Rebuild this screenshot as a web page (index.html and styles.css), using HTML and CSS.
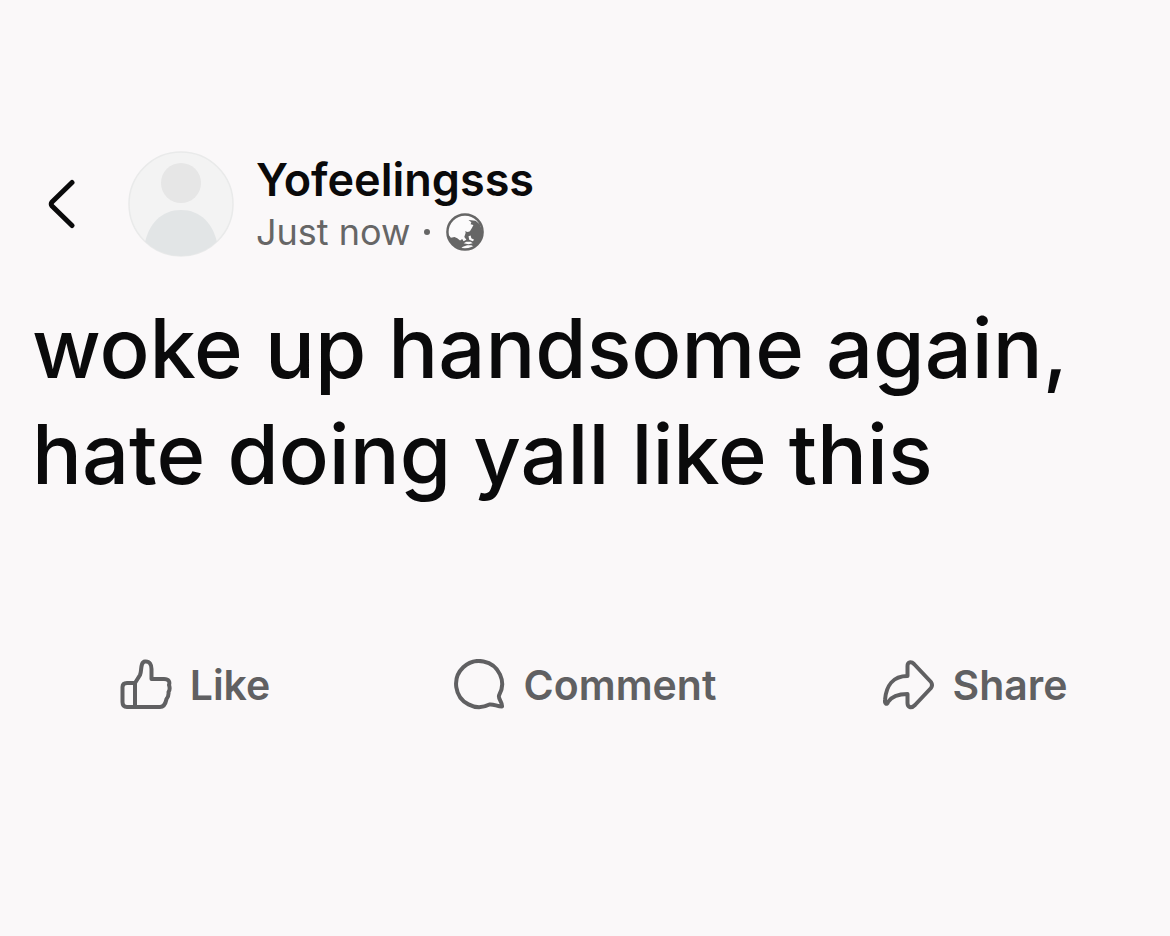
FILE: index.html
```html
<!DOCTYPE html>
<html lang="en">
<head>
  <meta charset="UTF-8">
  <meta name="viewport" content="width=device-width, initial-scale=1.0">
  <title>Yofeelingsss</title>
  <link rel="stylesheet" href="styles.css">
</head>
<body>
  <article class="post">
    <header class="post-header">
      <button class="back" type="button" aria-label="Back">
        <svg width="28" height="52" viewBox="0 0 28 52" fill="none" stroke="currentColor" stroke-width="5" stroke-linecap="round" stroke-linejoin="round">
          <path d="M24 4.500L4 24Q2.500 26 4 28L24 47.500"/>
        </svg>
      </button>
      <svg class="avatar" viewBox="0 0 106 106" aria-hidden="true">
        <defs>
          <clipPath id="avatar-clip"><circle cx="53" cy="53" r="52"/></clipPath>
        </defs>
        <circle cx="53" cy="53" r="52" fill="#f3f3f3" stroke="#e9eaea" stroke-width="1.500"/>
        <g clip-path="url(#avatar-clip)">
          <circle cx="53" cy="32" r="20" fill="#e6e6e6"/>
          <path d="M16 96C20 72 34 59 53 59S86 72 90 96L70 106H36Z" fill="#e2e5e6"/>
        </g>
      </svg>
      <div class="author">
        <h1 class="name">Yofeelingsss</h1>
        <p class="meta">
          <span>Just now</span>
          <span class="dot"></span>
          <svg class="globe" viewBox="0 0 108 108" aria-label="Public">
            <circle cx="54" cy="54" r="50" fill="#fcfbfc" stroke="#666" stroke-width="7"/>
            <path d="M64 20L84 22L96 32L104 54L100 74L88 92L80 96L72 92L60 92L48 96L42 101L24 94L8 74L5 60L14 70L24 68L32 72L40 78L46 74L50 80L58 76L52 68L56 56L54 52L62 54L68 52L74 42L78 34L70 32L72 26Z" fill="#666"/>
            <path d="M64 66L70 64L72 72L80 76L76 80L66 76ZM50 86L58 82L70 82L76 86L64 89Z" fill="#fcfbfc"/>
          </svg>
        </p>
      </div>
    </header>

    <p class="content">woke up handsome again, hate doing yall like this</p>

    <div class="actions">
      <button class="action" type="button">
        <svg class="icon" viewBox="0 0 52 52">
          <path d="M15 24L20 16C22 12 20 3 25 2.500C30 2 31.500 6 31.500 10V20H44C49 20 50 23 49 26Q50.500 30 48.500 33Q49 37 46.500 40C45.500 45 44 48 40 48H7C4 48 2.500 46 2.500 43V28C2.500 25 4 24 7 24H15V48"/>
        </svg>
        Like
      </button>
      <button class="action" type="button">
        <svg class="icon" viewBox="0 0 52 52">
          <path d="M45 36.500A23 23 0 1 0 35.500 45.500C40 45 43 47.500 48 47.500C48.500 43 44 40 45 36.500Z"/>
        </svg>
        Comment
      </button>
      <button class="action" type="button">
        <svg class="icon" viewBox="0 0 52 52">
          <path d="M24.500 17V7C24.500 3 28 2 31 5L48 23Q50 26 48 29L32 46C28 50 24.500 48 24.500 44V35C16 35 9 37 5 43C4 46 1.500 45 2 41C3 27 10 17 24.500 17Z"/>
        </svg>
        Share
      </button>
    </div>
  </article>
</body>
</html>
```
FILE: styles.css
```css
* {
  box-sizing: border-box;
}
body {
  font-family: Inter, "Liberation Sans", sans-serif;
  background-color: #faf8f9;
  color: #0a0a0b;
  margin: 0;
}
.post {
  padding-top: 151px;
}
.post-header {
  display: flex;
  align-items: center;
  padding: 0 48px;
}
button {
  font-family: inherit;
  background: none;
  border: none;
  padding: 0;
  cursor: pointer;
}
.back {
  display: flex;
  color: #0a0a0b;
  margin-right: 52px;
}
.avatar {
  width: 106px;
  height: 106px;
  margin-right: 22px;
}
.name {
  font-size: 45px;
  font-weight: 600;
  line-height: 56px;
  margin: 0;
}
.meta {
  display: flex;
  align-items: center;
  font-size: 36px;
  line-height: 48px;
  color: #666;
  margin: 0;
}
.dot {
  width: 6px;
  height: 6px;
  border-radius: 50%;
  background-color: #666;
  margin: 0 16px 0 14px;
}
.globe {
  width: 38px;
  height: 38px;
}
.content {
  font-size: 83px;
  font-weight: 500;
  line-height: 106px;
  margin: 38px 32px 0;
}
.actions {
  display: grid;
  grid-template-columns: repeat(3, 1fr);
  margin-top: 152px;
}
.action {
  display: flex;
  justify-content: center;
  align-items: center;
  gap: 18px;
  font-size: 41px;
  font-weight: 600;
  line-height: 52px;
  color: #606062;
}
.icon {
  width: 52px;
  height: 52px;
  fill: none;
  stroke: currentColor;
  stroke-width: 4;
  stroke-linecap: round;
  stroke-linejoin: round;
}
```
